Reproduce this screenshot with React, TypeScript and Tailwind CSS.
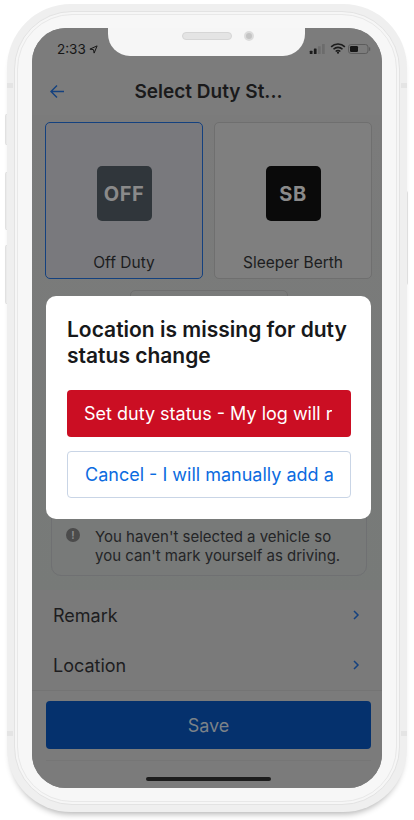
import React from "react";

function SideButton({ className }: { className: string }) {
  return <div className={`absolute w-[3px] rounded-sm bg-[#f0f0f0] border border-[#e4e4e4] ${className}`} />;
}

function StatusIcons() {
  return (
    <div className="flex items-center">
      <svg width="17" height="10" viewBox="0 0 17 11">
        <rect x="0" y="7.5" width="3" height="3.5" rx="0.6" fill="#1c1c1c" />
        <rect x="4.5" y="5" width="3" height="6" rx="0.6" fill="#1c1c1c" />
        <rect x="9" y="2.5" width="3" height="8.5" rx="0.6" fill="#6c6c6c" />
        <rect x="13.5" y="0" width="3" height="11" rx="0.6" fill="#6c6c6c" />
      </svg>
      <svg width="16" height="11" viewBox="0 0 17 12" className="ml-[4px]">
        <path d="M1 4.2a10.6 10.6 0 0 1 15 0M3.6 6.8a7 7 0 0 1 9.8 0M6 9.2a3.4 3.4 0 0 1 5 0" fill="none" stroke="#1c1c1c" strokeWidth="1.7" />
        <circle cx="8.5" cy="10.6" r="1.2" fill="#1c1c1c" />
      </svg>
      <svg width="23" height="10" viewBox="0 0 23 10" className="ml-[2px]">
        <rect x="0.5" y="0.5" width="19.5" height="9" rx="2.6" fill="none" stroke="#5c5c5c" />
        <rect x="2" y="2" width="8" height="6" rx="1.2" fill="#161616" />
        <rect x="21" y="3.2" width="1.2" height="3.6" rx="0.6" fill="#5c5c5c" />
      </svg>
    </div>
  );
}

function DutyCard({ label, code, selected, tile }: { label: string; code: string; selected?: boolean; tile: string }) {
  return (
    <div className={`flex h-[157px] flex-col items-center rounded-[5px] border pt-[43px] ${selected ? "border-[#14417f] bg-[#79797d]" : "border-[#6f6f6f] bg-[#7f7f7f]"}`}>
      <div className={`flex h-[55px] w-[55px] items-center justify-center rounded-[5px] text-[20px] font-bold tracking-[0.5px] text-[#8a8a8a] ${tile}`}>
        {code}
      </div>
      <div className="mt-[32px] text-[15.5px] leading-[20px] text-[#1c1d20]">{label}</div>
    </div>
  );
}

function Row({ label }: { label: string }) {
  return (
    <div className="flex h-[50px] items-center justify-between pl-[21px] pr-[22px]">
      <span className="text-[18px] text-[#1d1d1f]">{label}</span>
      <svg width="8" height="10" viewBox="0 0 8 10">
        <path d="M2 1l4 4-4 4" fill="none" stroke="#14417f" strokeWidth="1.5" />
      </svg>
    </div>
  );
}

export default function App() {
  return (
    <div className="relative h-[820px] w-[414px] overflow-hidden bg-white pl-[7px] pt-[4px]" style={{ fontFamily: 'Inter, "Noto Sans", sans-serif' }}>
      <SideButton className="left-[5px] top-[114px] h-[31px]" />
      <SideButton className="left-[5px] top-[172px] h-[58px]" />
      <SideButton className="left-[5px] top-[245px] h-[59px]" />
      <SideButton className="left-[405px] top-[191px] h-[94px]" />

      {/* device body */}
      <div className="relative h-[808px] w-[400px] rounded-[64px] bg-[#efefef] p-[7px] shadow-[0_6px_6px_-4px_rgba(0,0,0,0.3)]">
        <div className="h-full rounded-[58px] border border-[#e3e3e3] bg-[#f6f6f6] p-[2px]">
          <div className="h-full rounded-[55px] border border-[#e8e8e8] bg-[#f7f7f7] px-[14px] py-[13px]">
            {/* screen */}
            <div className="relative flex h-full flex-col overflow-hidden rounded-[34px] bg-[#7b7b7b]">
              {/* header */}
              <div className="h-[87px] shrink-0 bg-[#7c7c7c]">
                <div className="flex h-[40px] items-start justify-between pl-[25px] pr-[11px] pt-[11px]">
                  <div className="flex items-center gap-[3px] text-[13.5px] leading-[20px] text-[#161616]">
                    <span>2:33</span>
                    <svg width="9" height="9" viewBox="0 0 10 10">
                      <path d="M9 1L1 4.6l4 .6.7 3.8z" fill="none" stroke="#161616" strokeWidth="1.1" strokeLinejoin="round" />
                    </svg>
                  </div>
                  <div className="pt-[4px]">
                    <StatusIcons />
                  </div>
                </div>
                <div className="relative flex h-[47px] items-start justify-center pl-[3px] pt-[10px]">
                  <svg className="absolute left-[18px] top-[16px]" width="15" height="15" viewBox="0 0 15 15">
                    <path d="M14 7.5H1.5M7 1.5l-6 6 6 6" fill="none" stroke="#14417f" strokeWidth="1.4" />
                  </svg>
                  <span className="text-[19px] font-semibold leading-[28px] text-[#1a1a1b]">Select Duty St...</span>
                </div>
              </div>

              {/* body */}
              <div className="flex-1 bg-gradient-to-b from-[#7b7b7b] to-[#777a78] pl-[13px] pr-[10px] pt-[7px]">
                <div className="grid grid-cols-[158px_158px] gap-[11px]">
                  <DutyCard label="Off Duty" code="OFF" selected tile="bg-[#30363b]" />
                  <DutyCard label="Sleeper Berth" code="SB" tile="bg-[#0a0a0a]" />
                </div>
                <div className="mx-auto mt-[11px] h-[160px] w-[158px] rounded-[5px] border border-[#6f6f6f]" />
              </div>

              {/* notice */}
              <div className="absolute left-[19px] top-[433px] h-[115px] w-[316px] rounded-[10px] border border-[#6f7072] bg-[#787a79]">
                <div className="absolute left-[14px] top-[66px] flex h-[14px] w-[14px] items-center justify-center rounded-full bg-[#4b4b4b] text-[10px] font-bold leading-none text-[#8a8a8a]">!</div>
                <p className="absolute left-[43px] top-[65px] w-[262px] text-[15px] leading-[19px] text-[#242527]">
                  You haven't selected a vehicle so you can't mark yourself as driving.
                </p>
              </div>

              {/* rows */}
              <div className="shrink-0 bg-[#7a7a7a]">
                <Row label="Remark" />
                <Row label="Location" />
              </div>

              {/* footer */}
              <div className="shrink-0 border-t border-[#747474] bg-[#7b7b7b] pl-[14px] pr-[11px] pt-[10px]">
                <div className="flex h-[48px] items-center justify-center rounded-[4px] bg-[#05316d] text-[18px] text-[#7c8288]">Save</div>
                <div className="mt-[11px] flex h-[28px] items-end justify-center border-t border-[#767676] pb-[7px]">
                  <div className="h-[4px] w-[125px] rounded-full bg-[#1c1c1c]" />
                </div>
              </div>

              {/* notch */}
              <div className="absolute left-[76px] top-0 h-[28px] w-[197px] rounded-b-[22px] bg-[#f6f6f6]" />

              {/* modal */}
              <div className="absolute left-[14px] top-[268px] w-[325px] rounded-[10px] bg-white pb-[21px] pl-[21px] pr-[20px] pt-[21px]">
                <h2 className="text-[21px] font-semibold leading-[26px] text-[#17181a]">Location is missing for duty status change</h2>
                <div className="mt-[21px] flex h-[47px] items-center rounded-[4px] bg-[#cb0e23] pl-[17px] pr-[19px] text-[18px] text-white">
                  <span className="block overflow-hidden whitespace-nowrap">Set duty status - My log will remain incomplete</span>
                </div>
                <div className="mt-[14px] flex h-[47px] items-center rounded-[4px] border border-[#c9d5e6] px-[17px] text-[18px] text-[#0b6be0]">
                  <span className="block overflow-hidden whitespace-nowrap">Cancel - I will manually add a location</span>
                </div>
              </div>
            </div>
          </div>
        </div>

        {/* antenna bands */}
        <div className="absolute left-0 top-[79px] h-[5px] w-[6px] bg-[#e4e4e4]" />
        <div className="absolute right-0 top-[79px] h-[5px] w-[6px] bg-[#e4e4e4]" />
        <div className="absolute bottom-[76px] left-0 h-[5px] w-[6px] bg-[#e4e4e4]" />
        <div className="absolute bottom-[76px] right-0 h-[5px] w-[6px] bg-[#e4e4e4]" />

        {/* speaker and camera, over the notch */}
        <div className="absolute left-[175px] top-[28px] h-[8px] w-[50px] rounded-full border border-[#d6d6d6] bg-[#e4e4e4]" />
        <div className="absolute left-[237px] top-[27px] h-[10px] w-[10px] rounded-full border-2 border-[#dcdcdc] bg-[#c4c4c4]" />
      </div>
    </div>
  );
}
